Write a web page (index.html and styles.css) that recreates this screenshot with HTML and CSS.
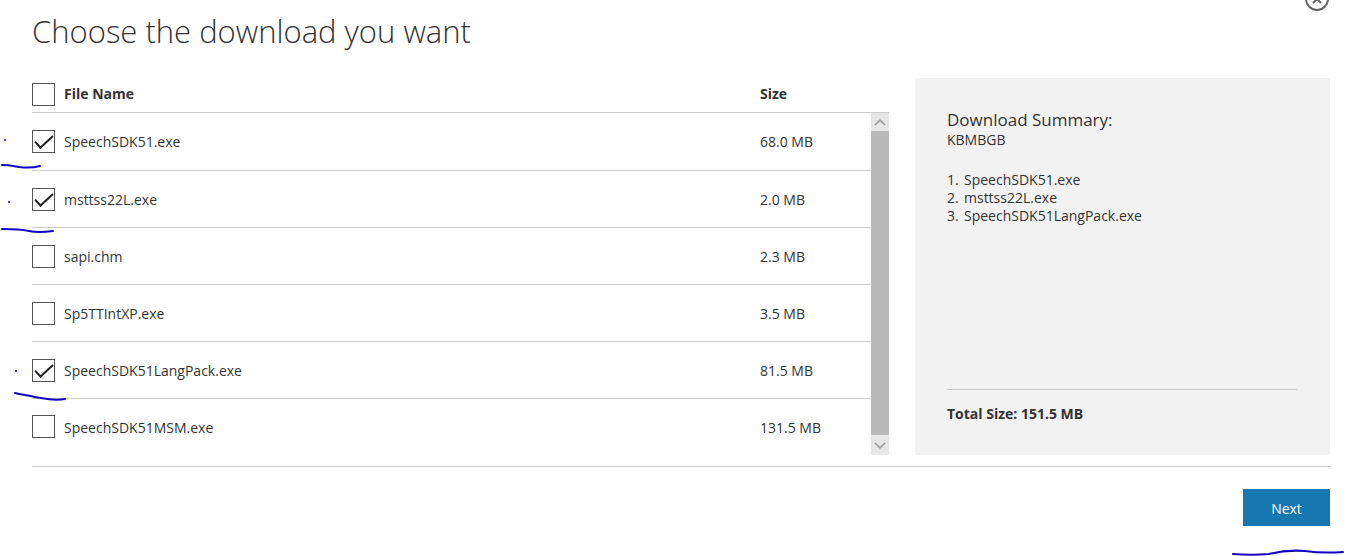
FILE: index.html
```html
<!DOCTYPE html>
<html lang="en">
<head>
    <meta charset="UTF-8">
    <meta name="viewport" content="width=device-width, initial-scale=1.0">
    <title>Choose the download you want</title>
    <link rel="stylesheet" href="styles.css">
</head>
<body>
    <div class="dialog">
        <button type="button" class="close" aria-label="Close">
            <svg width="24" height="24" viewBox="0 0 24 24" fill="none" stroke="#666" stroke-width="2">
                <circle cx="12" cy="12" r="11"/>
                <path d="M8 8l8 8M16 8l-8 8"/>
            </svg>
        </button>

        <h1>Choose the download you want</h1>

        <div class="content">
            <div class="files">
                <table class="files-head">
                    <thead>
                        <tr>
                            <th class="check"><input type="checkbox" id="all" aria-label="Select all"></th>
                            <th><label for="all">File Name</label></th>
                            <th class="size">Size</th>
                        </tr>
                    </thead>
                </table>
                <div class="files-list">
                    <table>
                        <tbody>
                            <tr>
                                <td class="check"><input type="checkbox" id="file1" checked></td>
                                <td><label for="file1">SpeechSDK51.exe</label></td>
                                <td class="size">68.0 MB</td>
                            </tr>
                            <tr>
                                <td class="check"><input type="checkbox" id="file2" checked></td>
                                <td><label for="file2">msttss22L.exe</label></td>
                                <td class="size">2.0 MB</td>
                            </tr>
                            <tr>
                                <td class="check"><input type="checkbox" id="file3"></td>
                                <td><label for="file3">sapi.chm</label></td>
                                <td class="size">2.3 MB</td>
                            </tr>
                            <tr>
                                <td class="check"><input type="checkbox" id="file4"></td>
                                <td><label for="file4">Sp5TTIntXP.exe</label></td>
                                <td class="size">3.5 MB</td>
                            </tr>
                            <tr>
                                <td class="check"><input type="checkbox" id="file5" checked></td>
                                <td><label for="file5">SpeechSDK51LangPack.exe</label></td>
                                <td class="size">81.5 MB</td>
                            </tr>
                            <tr>
                                <td class="check"><input type="checkbox" id="file6"></td>
                                <td><label for="file6">SpeechSDK51MSM.exe</label></td>
                                <td class="size">131.5 MB</td>
                            </tr>
                        </tbody>
                    </table>
                    <div class="scrollbar">
                        <svg width="18" height="18" viewBox="0 0 18 18"><path d="M4 12l5-5 5 5"/></svg>
                        <div class="thumb"></div>
                        <svg width="18" height="20" viewBox="0 0 18 20"><path d="M4 8l5 5 5-5"/></svg>
                    </div>
                </div>
            </div>

            <div class="summary">
                <h2>Download Summary:</h2>
                <div>KBMBGB</div>
                <ol>
                    <li>SpeechSDK51.exe</li>
                    <li>msttss22L.exe</li>
                    <li>SpeechSDK51LangPack.exe</li>
                </ol>
                <div class="total">Total Size: 151.5 MB</div>
            </div>
        </div>

        <div class="footer">
            <button type="button" class="next">Next</button>
        </div>

        <!-- pen marks -->
        <svg class="ink ink-left" width="70" height="410" viewBox="0 0 70 410">
            <path d="M2 165C9 165 13 166 19 167C27 168 33 168 40 166"/>
            <path d="M2 229C12 229 20 229 29 231C38 233 46 232 53 231"/>
            <path d="M15 393C22 395 28 395 35 397C47 399 53 401 65 399"/>
            <circle cx="5" cy="140" r="1"/>
            <circle cx="9" cy="202" r="1"/>
            <circle cx="16" cy="371" r="1"/>
        </svg>
        <svg class="ink ink-next" width="114" height="10" viewBox="0 0 114 10">
            <path d="M2 8C14 9 26 9 38 8C50 5 62 4 74 5C88 7 98 7 112 6"/>
        </svg>
    </div>
</body>
</html>
```

FILE: styles.css
```css
* {
    box-sizing: border-box;
}
body {
    margin: 0;
    font-family: "Segoe UI", "Open Sans", sans-serif;
    font-size: 14px;
    line-height: 18px;
    color: #333;
    background: #fff;
}
.dialog {
    position: relative;
    padding: 8px 33px 0 32px;
    overflow: hidden;
}
h1 {
    margin: 0 0 24px;
    font-size: 31px;
    line-height: 46px;
    font-weight: 300;
}
.close {
    position: absolute;
    top: -13px;
    right: 34px;
    width: 24px;
    height: 24px;
    padding: 0;
    border: none;
    background: none;
    cursor: pointer;
}
.close svg {
    display: block;
}
.content {
    display: grid;
    grid-template-columns: minmax(0, 1fr) 415px;
    gap: 26px;
    padding-bottom: 11px;
    border-bottom: 1px solid #ccc;
}

/* file list */
table {
    width: 100%;
    border-collapse: collapse;
    table-layout: fixed;
}
th,
td {
    padding: 0;
    text-align: left;
    vertical-align: middle;
}
td {
    height: 57px;
    padding-top: 2px;
    border-bottom: 1px solid #ccc;
}
tr:first-child td {
    height: 58px;
}
tr:last-child td {
    height: 56px;
    border-bottom: none;
}
th {
    padding-bottom: 2px;
}
.check {
    width: 32px;
    padding: 0;
}
.size {
    width: 111px;
}
.files-head {
    border-bottom: 1px solid #ccc;
}
.files-head th {
    height: 34px;
}
.files-head .size {
    width: 129px;
}
input[type="checkbox"] {
    appearance: none;
    display: block;
    width: 23px;
    height: 23px;
    margin: 0;
    border: 1px solid #555;
    background: #fff;
}
input[type="checkbox"]:checked::before {
    content: "";
    display: block;
    width: 16px;
    height: 7px;
    margin: 4px 0 0 2px;
    border-left: 2px solid #222;
    border-bottom: 2px solid #222;
    transform: rotate(-43deg);
}
.files-list {
    display: flex;
}
.scrollbar {
    display: flex;
    flex-direction: column;
    flex: 0 0 18px;
    background: #e6e6e6;
}
.scrollbar svg {
    display: block;
    fill: none;
    stroke: #999;
    stroke-width: 1.5;
}
.thumb {
    flex: 1;
    background: #b9b9b9;
}

/* summary */
.summary {
    display: flex;
    flex-direction: column;
    padding: 30px 33px 32px 32px;
    background: #f2f2f2;
}
h2 {
    margin: 0;
    font-size: 17px;
    line-height: 23px;
    font-weight: 400;
}
.summary ol {
    margin: 22px 0;
    padding: 0;
    list-style: none;
    counter-reset: file;
}
.summary li {
    display: flex;
    counter-increment: file;
}
.summary li::before {
    content: counter(file) ".";
    width: 17px;
}
.total {
    margin-top: auto;
    padding-top: 15px;
    border-top: 1px solid #ccc;
    font-weight: bold;
}

.footer {
    display: flex;
    justify-content: flex-end;
    padding: 22px 0 30px;
}
.next {
    width: 87px;
    height: 37px;
    padding: 4px 0 0;
    border: none;
    background: #1777b0;
    color: #fff;
    font: inherit;
    cursor: pointer;
}

.ink {
    position: absolute;
    fill: none;
    stroke: #1400c4;
    stroke-width: 2;
    stroke-linecap: round;
    pointer-events: none;
}
.ink circle {
    fill: #1400c4;
    stroke: none;
}
.ink-left {
    top: 0;
    left: 0;
}
.ink-next {
    right: 18px;
    bottom: 0;
}
```
